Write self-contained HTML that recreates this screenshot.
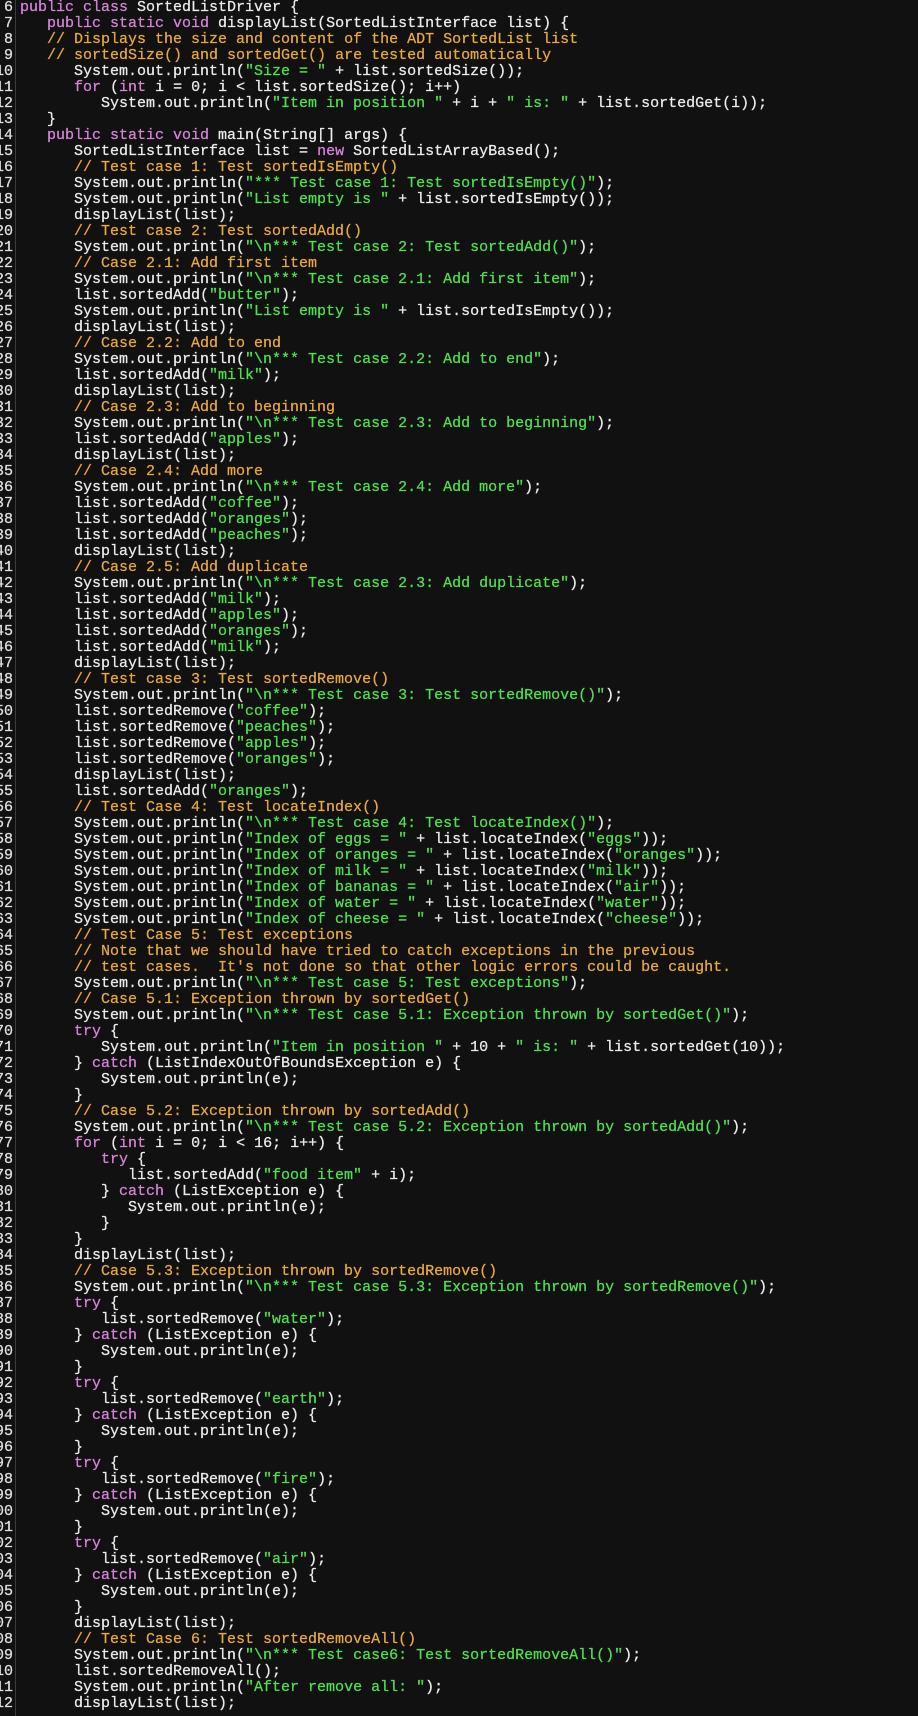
<!DOCTYPE html>
<html><head><meta charset="utf-8"><style>
html,body{margin:0;padding:0;background:#111111;width:918px;height:1716px;overflow:hidden}
#g{position:absolute;left:0;top:0;width:13px;overflow:hidden;direction:rtl;text-align:right;color:#e0e0e0}
#sep{position:absolute;left:15px;top:0;width:1px;height:1716px;background:#3c3c3c}
#code{position:absolute;left:20px;top:0;color:#ececec}
pre{margin:0;font-family:"Liberation Mono",monospace;font-size:15px;line-height:16px;-webkit-text-stroke:0.25px currentColor}
.k{color:#d884d8}.c{color:#e9a93f}.s{color:#4fe04f}
</style></head><body>
<pre id="g">6
7
8
9
10
11
12
13
14
15
16
17
18
19
20
21
22
23
24
25
26
27
28
29
30
31
32
33
34
35
36
37
38
39
40
41
42
43
44
45
46
47
48
49
50
51
52
53
54
55
56
57
58
59
60
61
62
63
64
65
66
67
68
69
70
71
72
73
74
75
76
77
78
79
80
81
82
83
84
85
86
87
88
89
90
91
92
93
94
95
96
97
98
99
100
101
102
103
104
105
106
107
108
109
110
111
112</pre>
<div id="sep"></div>
<pre id="code"><span class="k">public class</span> SortedListDriver {
   <span class="k">public static void</span> displayList(SortedListInterface list) {
   <span class="c">// Displays the size and content of the ADT SortedList list</span>
   <span class="c">// sortedSize() and sortedGet() are tested automatically</span>
      System.out.println(<span class="s">"Size = "</span> + list.sortedSize());
      <span class="k">for</span> (<span class="k">int</span> i = 0; i &lt; list.sortedSize(); i++)
         System.out.println(<span class="s">"Item in position "</span> + i + <span class="s">" is: "</span> + list.sortedGet(i));
   }
   <span class="k">public static void</span> main(String[] args) {
      SortedListInterface list = <span class="k">new</span> SortedListArrayBased();
      <span class="c">// Test case 1: Test sortedIsEmpty()</span>
      System.out.println(<span class="s">"*** Test case 1: Test sortedIsEmpty()"</span>);
      System.out.println(<span class="s">"List empty is "</span> + list.sortedIsEmpty());
      displayList(list);
      <span class="c">// Test case 2: Test sortedAdd()</span>
      System.out.println(<span class="s">"\n*** Test case 2: Test sortedAdd()"</span>);
      <span class="c">// Case 2.1: Add first item</span>
      System.out.println(<span class="s">"\n*** Test case 2.1: Add first item"</span>);
      list.sortedAdd(<span class="s">"butter"</span>);
      System.out.println(<span class="s">"List empty is "</span> + list.sortedIsEmpty());
      displayList(list);
      <span class="c">// Case 2.2: Add to end</span>
      System.out.println(<span class="s">"\n*** Test case 2.2: Add to end"</span>);
      list.sortedAdd(<span class="s">"milk"</span>);
      displayList(list);
      <span class="c">// Case 2.3: Add to beginning</span>
      System.out.println(<span class="s">"\n*** Test case 2.3: Add to beginning"</span>);
      list.sortedAdd(<span class="s">"apples"</span>);
      displayList(list);
      <span class="c">// Case 2.4: Add more</span>
      System.out.println(<span class="s">"\n*** Test case 2.4: Add more"</span>);
      list.sortedAdd(<span class="s">"coffee"</span>);
      list.sortedAdd(<span class="s">"oranges"</span>);
      list.sortedAdd(<span class="s">"peaches"</span>);
      displayList(list);
      <span class="c">// Case 2.5: Add duplicate</span>
      System.out.println(<span class="s">"\n*** Test case 2.3: Add duplicate"</span>);
      list.sortedAdd(<span class="s">"milk"</span>);
      list.sortedAdd(<span class="s">"apples"</span>);
      list.sortedAdd(<span class="s">"oranges"</span>);
      list.sortedAdd(<span class="s">"milk"</span>);
      displayList(list);
      <span class="c">// Test case 3: Test sortedRemove()</span>
      System.out.println(<span class="s">"\n*** Test case 3: Test sortedRemove()"</span>);
      list.sortedRemove(<span class="s">"coffee"</span>);
      list.sortedRemove(<span class="s">"peaches"</span>);
      list.sortedRemove(<span class="s">"apples"</span>);
      list.sortedRemove(<span class="s">"oranges"</span>);
      displayList(list);
      list.sortedAdd(<span class="s">"oranges"</span>);
      <span class="c">// Test Case 4: Test locateIndex()</span>
      System.out.println(<span class="s">"\n*** Test case 4: Test locateIndex()"</span>);
      System.out.println(<span class="s">"Index of eggs = "</span> + list.locateIndex(<span class="s">"eggs"</span>));
      System.out.println(<span class="s">"Index of oranges = "</span> + list.locateIndex(<span class="s">"oranges"</span>));
      System.out.println(<span class="s">"Index of milk = "</span> + list.locateIndex(<span class="s">"milk"</span>));
      System.out.println(<span class="s">"Index of bananas = "</span> + list.locateIndex(<span class="s">"air"</span>));
      System.out.println(<span class="s">"Index of water = "</span> + list.locateIndex(<span class="s">"water"</span>));
      System.out.println(<span class="s">"Index of cheese = "</span> + list.locateIndex(<span class="s">"cheese"</span>));
      <span class="c">// Test Case 5: Test exceptions</span>
      <span class="c">// Note that we should have tried to catch exceptions in the previous</span>
      <span class="c">// test cases.  It's not done so that other logic errors could be caught.</span>
      System.out.println(<span class="s">"\n*** Test case 5: Test exceptions"</span>);
      <span class="c">// Case 5.1: Exception thrown by sortedGet()</span>
      System.out.println(<span class="s">"\n*** Test case 5.1: Exception thrown by sortedGet()"</span>);
      <span class="k">try</span> {
         System.out.println(<span class="s">"Item in position "</span> + 10 + <span class="s">" is: "</span> + list.sortedGet(10));
      } <span class="k">catch</span> (ListIndexOutOfBoundsException e) {
         System.out.println(e);
      }
      <span class="c">// Case 5.2: Exception thrown by sortedAdd()</span>
      System.out.println(<span class="s">"\n*** Test case 5.2: Exception thrown by sortedAdd()"</span>);
      <span class="k">for</span> (<span class="k">int</span> i = 0; i &lt; 16; i++) {
         <span class="k">try</span> {
            list.sortedAdd(<span class="s">"food item"</span> + i);
         } <span class="k">catch</span> (ListException e) {
            System.out.println(e);
         }
      }
      displayList(list);
      <span class="c">// Case 5.3: Exception thrown by sortedRemove()</span>
      System.out.println(<span class="s">"\n*** Test case 5.3: Exception thrown by sortedRemove()"</span>);
      <span class="k">try</span> {
         list.sortedRemove(<span class="s">"water"</span>);
      } <span class="k">catch</span> (ListException e) {
         System.out.println(e);
      }
      <span class="k">try</span> {
         list.sortedRemove(<span class="s">"earth"</span>);
      } <span class="k">catch</span> (ListException e) {
         System.out.println(e);
      }
      <span class="k">try</span> {
         list.sortedRemove(<span class="s">"fire"</span>);
      } <span class="k">catch</span> (ListException e) {
         System.out.println(e);
      }
      <span class="k">try</span> {
         list.sortedRemove(<span class="s">"air"</span>);
      } <span class="k">catch</span> (ListException e) {
         System.out.println(e);
      }
      displayList(list);
      <span class="c">// Test Case 6: Test sortedRemoveAll()</span>
      System.out.println(<span class="s">"\n*** Test case6: Test sortedRemoveAll()"</span>);
      list.sortedRemoveAll();
      System.out.println(<span class="s">"After remove all: "</span>);
      displayList(list);</pre>
</body></html>
